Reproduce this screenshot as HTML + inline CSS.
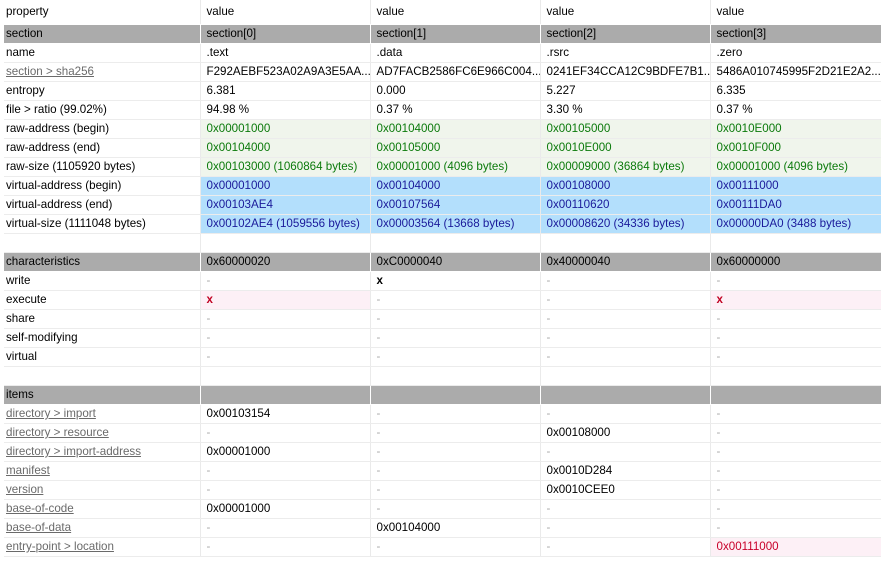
<!DOCTYPE html><html><head><style>
body{margin:0;background:#fff;font-family:"Liberation Sans",sans-serif;font-size:11.6px;color:#000;width:881px;height:561px;overflow:hidden}
table{position:absolute;left:4px;top:0;border-collapse:collapse;table-layout:fixed;width:877px}
td{height:18px;padding:0 0 0 2px;border-bottom:1px solid #ececec;border-right:1px solid #eaeaea;white-space:nowrap;overflow:hidden;line-height:18px}
td+td{padding-left:6px}
tr.h td{height:24px;line-height:24px;border-bottom:1px solid #fff}
tr.g td{background:#ababab;border-bottom:1px solid #fff;border-right:1px solid #fff}
.gr{background:#f0f5ec;color:#0b7a0b}
.bl{background:#b3dffc;color:#1a1a9a}
.pk{background:#fdf0f6;color:#c8002a}
.d{color:#a8a8a8}
.l{color:#6a6a6a;text-decoration:underline}
.x{font-weight:bold}
.pk.x{color:#c00020}
</style></head><body>
<table>
<colgroup><col style="width:196px"><col style="width:170px"><col style="width:170px"><col style="width:170px"><col style="width:171px"></colgroup>
<tr class="h"><td>property</td><td>value</td><td>value</td><td>value</td><td>value</td></tr>
<tr class="g"><td>section</td><td>section[0]</td><td>section[1]</td><td>section[2]</td><td>section[3]</td></tr>
<tr><td>name</td><td>.text</td><td>.data</td><td>.rsrc</td><td>.zero</td></tr>
<tr><td class="l">section &gt; sha256</td><td>F292AEBF523A02A9A3E5AA...</td><td>AD7FACB2586FC6E966C004...</td><td>0241EF34CCA12C9BDFE7B1...</td><td>5486A010745995F2D21E2A2...</td></tr>
<tr><td>entropy</td><td>6.381</td><td>0.000</td><td>5.227</td><td>6.335</td></tr>
<tr><td>file &gt; ratio (99.02%)</td><td>94.98 %</td><td>0.37 %</td><td>3.30 %</td><td>0.37 %</td></tr>
<tr><td>raw-address (begin)</td><td class="gr">0x00001000</td><td class="gr">0x00104000</td><td class="gr">0x00105000</td><td class="gr">0x0010E000</td></tr>
<tr><td>raw-address (end)</td><td class="gr">0x00104000</td><td class="gr">0x00105000</td><td class="gr">0x0010E000</td><td class="gr">0x0010F000</td></tr>
<tr><td>raw-size (1105920 bytes)</td><td class="gr">0x00103000 (1060864 bytes)</td><td class="gr">0x00001000 (4096 bytes)</td><td class="gr">0x00009000 (36864 bytes)</td><td class="gr">0x00001000 (4096 bytes)</td></tr>
<tr><td>virtual-address (begin)</td><td class="bl">0x00001000</td><td class="bl">0x00104000</td><td class="bl">0x00108000</td><td class="bl">0x00111000</td></tr>
<tr><td>virtual-address (end)</td><td class="bl">0x00103AE4</td><td class="bl">0x00107564</td><td class="bl">0x00110620</td><td class="bl">0x00111DA0</td></tr>
<tr><td>virtual-size (1111048 bytes)</td><td class="bl">0x00102AE4 (1059556 bytes)</td><td class="bl">0x00003564 (13668 bytes)</td><td class="bl">0x00008620 (34336 bytes)</td><td class="bl">0x00000DA0 (3488 bytes)</td></tr>
<tr><td></td><td></td><td></td><td></td><td></td></tr>
<tr class="g"><td>characteristics</td><td>0x60000020</td><td>0xC0000040</td><td>0x40000040</td><td>0x60000000</td></tr>
<tr><td>write</td><td class="d">-</td><td class="x">x</td><td class="d">-</td><td class="d">-</td></tr>
<tr><td>execute</td><td class="pk x">x</td><td class="d">-</td><td class="d">-</td><td class="pk x">x</td></tr>
<tr><td>share</td><td class="d">-</td><td class="d">-</td><td class="d">-</td><td class="d">-</td></tr>
<tr><td>self-modifying</td><td class="d">-</td><td class="d">-</td><td class="d">-</td><td class="d">-</td></tr>
<tr><td>virtual</td><td class="d">-</td><td class="d">-</td><td class="d">-</td><td class="d">-</td></tr>
<tr><td></td><td></td><td></td><td></td><td></td></tr>
<tr class="g"><td>items</td><td></td><td></td><td></td><td></td></tr>
<tr><td class="l">directory &gt; import</td><td>0x00103154</td><td class="d">-</td><td class="d">-</td><td class="d">-</td></tr>
<tr><td class="l">directory &gt; resource</td><td class="d">-</td><td class="d">-</td><td>0x00108000</td><td class="d">-</td></tr>
<tr><td class="l">directory &gt; import-address</td><td>0x00001000</td><td class="d">-</td><td class="d">-</td><td class="d">-</td></tr>
<tr><td class="l">manifest</td><td class="d">-</td><td class="d">-</td><td>0x0010D284</td><td class="d">-</td></tr>
<tr><td class="l">version</td><td class="d">-</td><td class="d">-</td><td>0x0010CEE0</td><td class="d">-</td></tr>
<tr><td class="l">base-of-code</td><td>0x00001000</td><td class="d">-</td><td class="d">-</td><td class="d">-</td></tr>
<tr><td class="l">base-of-data</td><td class="d">-</td><td>0x00104000</td><td class="d">-</td><td class="d">-</td></tr>
<tr><td class="l">entry-point &gt; location</td><td class="d">-</td><td class="d">-</td><td class="d">-</td><td class="pk">0x00111000</td></tr>
</table>
</body></html>
